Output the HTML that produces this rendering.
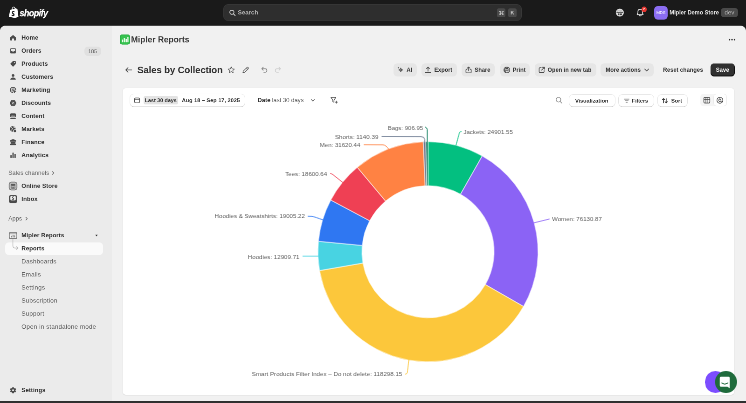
<!DOCTYPE html>
<html>
<head>
<meta charset="utf-8">
<title>Mipler Reports</title>
<style>
*{box-sizing:border-box;margin:0;padding:0}
html,body{width:746px;height:403px;overflow:hidden;background:#1a1a1a;font-family:"Liberation Sans",sans-serif;}
#app{will-change:transform;position:absolute;left:0;top:0;width:1600px;height:864.4px;transform:scale(.46625);transform-origin:0 0;background:#1a1a1a;color:#303030;font-size:13px;line-height:20px;overflow:hidden}
.abs{position:absolute}
/* ---------- top bar ---------- */
#topbar{position:absolute;left:0;top:0;width:1600px;height:54px;background:#1a1a1a}
#search{position:absolute;left:479px;top:9px;width:640px;height:36px;border-radius:10px;background:#2e2e2e;border:1px solid #383838}
#search .txt{position:absolute;left:30px;top:7px;color:#b5b5b5;font-size:13px;font-weight:bold;letter-spacing:.1px}
.kbd{position:absolute;top:8px;width:18px;height:19px;border-radius:4px;background:#4a4a4a;color:#cfcfcf;font-size:11px;line-height:19px;text-align:center;font-weight:bold}
#store{position:absolute;left:1436px;top:17px;color:#e3e3e3;font-size:12px;font-weight:bold;white-space:nowrap}
#avatar{position:absolute;left:1403px;top:12.5px;width:29px;height:29px;border-radius:8px;background:#8b6df2;color:#fff;font-size:9px;line-height:28px;text-align:center;letter-spacing:-.2px}
#dev{position:absolute;left:1546px;top:17px;width:37px;height:20px;border-radius:7px;background:#4a4a4a;color:#b5b5b5;font-size:13px;line-height:19px;text-align:center}
/* ---------- frame ---------- */
#frame{position:absolute;left:0;top:55px;width:1600px;height:805.7px;background:#f1f1f1;border-radius:12px 12px 0 0;overflow:hidden}
#side{position:absolute;left:0;top:0;width:240px;height:810px;background:#ebebeb}
.nav{margin-top:1px;position:absolute;left:46px;height:28px;line-height:28px;font-size:12.9px;font-weight:bold;color:#303030;white-space:nowrap;letter-spacing:.1px}
.nav.sub{font-weight:normal;color:#5a5a5a;font-size:13.4px;letter-spacing:.3px}
.nav.sec{left:18px;font-weight:normal;color:#616161;font-size:12.7px}
.ico{margin-top:1px;position:absolute;left:18px;width:20px;height:20px}
.ico svg{display:block;width:20px;height:20px;transform:scale(.87)}
#badge185{position:absolute;left:180.500px;top:45.5px;width:36px;height:20px;border-radius:8px;background:#e0e0e0;color:#616161;font-size:11.5px;line-height:20px;text-align:center}
#selnav{position:absolute;left:10.5px;top:465.5px;width:210px;height:27px;border-radius:8px;background:#fafafa}
/* ---------- page ---------- */
#apphead{position:absolute;left:281px;top:20px;letter-spacing:.1px;font-size:17.7px;font-weight:bold;color:#383838;line-height:22px;white-space:nowrap}
#title{position:absolute;left:294.5px;top:83px;font-size:20.2px;font-weight:bold;color:#303030;line-height:26px;white-space:nowrap;letter-spacing:-.1px}
.btn{position:absolute;top:82px;height:28px;border-radius:8px;background:#e6e6e6;color:#303030;letter-spacing:.05px;font-size:12.1px;font-weight:bold;line-height:28px;white-space:nowrap}
.btn span{position:absolute;top:0}
.btn svg{position:absolute;top:5px;width:18px;height:18px;margin-left:-1.5px}
#save{background:#303030;color:#fff;box-shadow:inset 0 -1px 0 1px rgba(0,0,0,.8),inset 0 1px 0 rgba(255,255,255,.25)}
#card{position:absolute;left:263px;top:135px;width:1312px;height:658px;border-radius:7px;background:#fff;box-shadow:0 1px 0 rgba(0,0,0,.12),0 0 0 1px rgba(0,0,0,.04)}
#divider{position:absolute;left:0;top:55px;width:1312px;height:1px;background:#ececec}
.tbtn{position:absolute;top:13px;height:26px;border-radius:8px;background:#fff;box-shadow:0 0 0 1px #e3e3e3,0 1.5px 0 0 #bebebe;color:#303030;font-size:11.7px;font-weight:bold;line-height:26px;white-space:nowrap}
.tbtn span{position:absolute;top:0}
.tbtn svg{position:absolute;top:5px;width:16px;height:16px}
#l30{position:absolute;left:29px;top:4px;height:18px;width:74px;border-radius:4px;background:#e3e3e3}
/* chart overlay (unscaled target px) */
#chart{will-change:transform;position:absolute;left:0;top:0;width:746px;height:403px;pointer-events:none}
#chart text{font-family:"Liberation Sans",sans-serif;font-size:6.12px;fill:#5e5e5e}
#fab1{position:absolute;left:704.8px;top:371.3px;width:21.4px;height:21.4px;border-radius:50%;background:#7c4dff}
#fab2{position:absolute;left:714.6px;top:371.3px;width:22px;height:22px;border-radius:50%;background:#1f6b3c}
#bottomstrip{position:absolute;left:0;top:401.3px;width:746px;height:2px;background:#303030}
</style>
</head>
<body>
<div id="app">
  <div id="topbar">
    <!-- shopify logo -->
    <svg class="abs" style="left:17.5px;top:13.5px;width:22px;height:25.5px" viewBox="0 0 24 28">
      <path d="M4.2 7.6 L15.2 5.2 L17.6 3.2 L19.4 5.6 L21.2 6 L23.6 24.6 L14.8 26.8 L1 24.2 Z" fill="#fff"/>
      <path d="M8.6 7 C8.8 3.6 10.6 1.2 12.6 1.2 C14.4 1.2 15.4 3 15.4 6" fill="none" stroke="#fff" stroke-width="1.5"/>
      <path d="M14.6 10.6 L13.6 13.6 C12.6 13 11.4 13 10.8 13.4 C10 14 10.6 14.8 12 15.6 C13.8 16.6 14.8 18 14.4 20 C14 22.2 12 23.2 10 22.8 C8.8 22.6 7.8 22 7.2 21.2 L8 18.6 C8.8 19.4 10 20 10.8 19.8 C11.6 19.6 11.6 18.8 10.6 18 C8.8 16.8 7.8 15.6 8.2 13.6 C8.6 11 11.6 9.4 14.6 10.6Z" fill="#1a1a1a"/>
    </svg>
    <div class="abs" style="left:42px;top:13.5px;color:#fff;font-size:18.6px;font-weight:bold;font-style:italic;line-height:28px;letter-spacing:-.85px;transform:scaleY(1.09);transform-origin:0 50%;-webkit-text-stroke:.35px #fff">shopify</div>
    <div id="search">
      <svg class="abs" style="left:11px;top:10px;width:15px;height:15px" viewBox="0 0 17 17"><circle cx="7.2" cy="7.2" r="5" fill="none" stroke="#d0d0d0" stroke-width="2"/><path d="M11 11 L15 15" stroke="#d0d0d0" stroke-width="2.2" stroke-linecap="round"/></svg>
      <div class="txt">Search</div>
      <div class="kbd" style="left:586px"><svg viewBox="0 0 12 12" style="position:absolute;left:3.5px;top:4px;width:11px;height:11px"><path d="M4.2 4.2 H7.800 V7.800 H4.200 Z M4.200 4.200 V3 A1.300 1.300 0 1 0 3 4.200 Z M7.800 4.200 H9 A1.300 1.300 0 1 0 7.800 3 Z M7.800 7.800 V9 A1.300 1.300 0 1 0 9 7.800 Z M4.200 7.800 H3 A1.300 1.300 0 1 0 4.200 9 Z" fill="none" stroke="#d4d4d4" stroke-width="1.100"/></svg></div>
      <div class="kbd" style="left:610px">K</div>
    </div>
    <!-- storefront icon -->
    <svg class="abs" style="left:1319px;top:17px;width:20px;height:20px" viewBox="0 0 20 20">
      <circle cx="10.4" cy="10" r="8.600" fill="#dedede"/>
      <path d="M3.400 8.600 Q4.600 10.400 6 8.800 Q7.400 10.400 8.800 8.800 Q10.400 10.400 11.800 8.800 Q13.400 10.400 14.800 8.800 Q16.200 10.400 17.400 8.600" fill="none" stroke="#2a2a2a" stroke-width="1.500"/>
      <path d="M4.800 6.200 H16" stroke="#8a8a8a" stroke-width="1"/>
      <rect x="6" y="11.800" width="3.600" height="3.600" rx=".6" fill="#3a3a3a"/>
      <rect x="11" y="11.800" width="3.800" height="3.600" rx=".6" fill="#3a3a3a"/>
    </svg>
    <!-- bell -->
    <svg class="abs" style="left:1363px;top:17px;width:20px;height:20px" viewBox="0 0 20 20">
      <path d="M10 2.8 C6.8 2.8 5.2 5.2 5.2 8 V11 L3.6 13.6 Q3.4 14.4 4.4 14.4 H15.6 Q16.6 14.4 16.4 13.6 L14.8 11 V8 C14.8 5.2 13.2 2.8 10 2.8Z" fill="none" stroke="#e3e3e3" stroke-width="1.7" stroke-linejoin="round"/>
      <path d="M7.8 16 Q10 18.6 12.2 16" fill="none" stroke="#e3e3e3" stroke-width="1.7" stroke-linecap="round"/>
    </svg>
    <div class="abs" style="left:1375.5px;top:14px;width:11.5px;height:11.5px;border-radius:50%;background:#e5352f;color:#fff;font-size:7px;line-height:11px;text-align:center;font-weight:bold">2</div>
    <div id="avatar">MDS</div>
    <div id="store">Mipler Demo Store</div>
    <div id="dev">dev</div>
  </div>

  <div id="frame"><div id="inner" style="position:absolute;left:0;top:-1px;width:1600px;height:807px">
    <div id="side">
      <div id="selnav"></div>
      <!-- main nav -->
      <div class="nav" style="top:12px">Home</div>
      <div class="nav" style="top:40px">Orders</div>
      <div class="nav" style="top:68px">Products</div>
      <div class="nav" style="top:96px">Customers</div>
      <div class="nav" style="top:124px">Marketing</div>
      <div class="nav" style="top:152px">Discounts</div>
      <div class="nav" style="top:180px">Content</div>
      <div class="nav" style="top:208px">Markets</div>
      <div class="nav" style="top:236px">Finance</div>
      <div class="nav" style="top:264px">Analytics</div>
      <div id="badge185">185</div>

      <div class="nav sec" style="top:302px">Sales channels</div>
      <svg class="abs" style="left:108.5px;top:312px;width:10px;height:10px" viewBox="0 0 10 10"><path d="M3.5 2 L6.5 5 L3.5 8" fill="none" stroke="#616161" stroke-width="1.4" stroke-linecap="round" stroke-linejoin="round"/></svg>
      <div class="nav" style="top:330px">Online Store</div>
      <div class="nav" style="top:358px">Inbox</div>

      <div class="nav sec" style="top:400px">Apps</div>
      <svg class="abs" style="left:52px;top:410px;width:10px;height:10px" viewBox="0 0 10 10"><path d="M3.5 2 L6.5 5 L3.5 8" fill="none" stroke="#616161" stroke-width="1.4" stroke-linecap="round" stroke-linejoin="round"/></svg>

      <div class="nav" style="top:436px">Mipler Reports</div>
      <svg class="abs" style="left:202px;top:446px;width:10px;height:10px" viewBox="0 0 10 10"><path d="M2.4 3.4 H7.6 L5 7 Z" fill="#303030"/></svg>
      <div class="nav" style="top:464px">Reports</div>
      <div class="nav sub" style="top:492px">Dashboards</div>
      <div class="nav sub" style="top:520px">Emails</div>
      <div class="nav sub" style="top:548px">Settings</div>
      <div class="nav sub" style="top:576px">Subscription</div>
      <div class="nav sub" style="top:604px">Support</div>
      <div class="nav sub" style="top:632px">Open in standalone mode</div>

      <div class="nav" style="top:768px">Settings</div>

      <!-- icons -->
      <div class="ico" style="top:16px"><svg viewBox="0 0 20 20"><path d="M10 3 L3.6 8.6 Q3 9.2 3 10 V15.4 Q3 16.6 4.2 16.6 H7.6 V12.6 Q7.6 11.6 8.6 11.6 H11.4 Q12.4 11.6 12.4 12.6 V16.6 H15.8 Q17 16.6 17 15.4 V10 Q17 9.2 16.4 8.6 Z" fill="#4a4a4a"/></svg></div>
      <div class="ico" style="top:44px"><svg viewBox="0 0 20 20"><path d="M5 3.6 H15 Q16.8 3.6 16.8 5.4 V14.6 Q16.8 16.4 15 16.4 H5 Q3.2 16.4 3.2 14.6 V5.4 Q3.2 3.6 5 3.6Z M5 5.4 V10.6 H7.4 Q8 10.6 8.2 11.2 Q8.6 12.4 10 12.4 Q11.4 12.4 11.8 11.2 Q12 10.6 12.6 10.6 H15 V5.4 Z" fill="#4a4a4a" fill-rule="evenodd"/></svg></div>
      <div class="ico" style="top:72px"><svg viewBox="0 0 20 20"><path d="M10.4 3.2 H15.4 Q16.8 3.2 16.8 4.6 V9.6 Q16.8 10.4 16.2 11 L11 16.2 Q10 17.2 9 16.2 L3.8 11 Q2.8 10 3.8 9 L9 3.8 Q9.6 3.2 10.4 3.2Z M13.4 5.4 A1.2 1.2 0 1 0 13.41 5.4Z" fill="#4a4a4a" fill-rule="evenodd"/></svg></div>
      <div class="ico" style="top:100px"><svg viewBox="0 0 20 20"><circle cx="10" cy="6.4" r="3.4" fill="#4a4a4a"/><path d="M3.6 16.6 Q3.2 16.6 3.4 15.6 Q4.6 11.4 10 11.4 Q15.4 11.4 16.6 15.6 Q16.8 16.6 16.4 16.6 Z" fill="#4a4a4a"/></svg></div>
      <div class="ico" style="top:128px"><svg viewBox="0 0 20 20"><path d="M16.400 8.800 A6.600 6.600 0 1 0 8.800 16.400" fill="none" stroke="#4a4a4a" stroke-width="2.300" stroke-linecap="round"/><path d="M12.600 8.400 A3 3 0 1 0 8.400 12.600" fill="none" stroke="#4a4a4a" stroke-width="2" stroke-linecap="round"/><path d="M10.200 10.200 L18 12.800 L14.800 14.600 L13 18 Z" fill="#4a4a4a" stroke="#4a4a4a" stroke-width=".8" stroke-linejoin="round"/></svg></div>
      <div class="ico" style="top:156px"><svg viewBox="0 0 20 20"><path d="M10 2.4 L12 4 L14.6 3.8 L15.4 6.2 L17.6 7.6 L16.8 10 L17.6 12.4 L15.4 13.8 L14.6 16.2 L12 16 L10 17.6 L8 16 L5.4 16.2 L4.600 13.8 L2.4 12.4 L3.2 10 L2.4 7.6 L4.6 6.2 L5.4 3.8 L8 4 Z" fill="#4a4a4a" stroke="#4a4a4a" stroke-width="1" stroke-linejoin="round"/><circle cx="7.8" cy="7.8" r="1.1" fill="#ebebeb"/><circle cx="12.2" cy="12.2" r="1.1" fill="#ebebeb"/><path d="M12.6 7.4 L7.4 12.600" stroke="#ebebeb" stroke-width="1.3" stroke-linecap="round"/></svg></div>
      <div class="ico" style="top:184px"><svg viewBox="0 0 20 20"><path d="M5 3.400 H15 Q17 3.400 17 5.400 V10.600 Q17 12.600 15 12.600 H5 Q3 12.600 3 10.600 V5.400 Q3 3.400 5 3.400Z" fill="#4a4a4a"/><path d="M5 10.400 L7.600 8 L9.800 10 L12.400 8.400 L15 10.600 V10.800 H5Z" fill="#ebebeb"/><rect x="3" y="14.200" width="14" height="2.600" rx="1.300" fill="#4a4a4a"/></svg></div>
      <div class="ico" style="top:212px"><svg viewBox="0 0 20 20"><circle cx="9.400" cy="9.400" r="7" fill="#4a4a4a"/><path d="M4.600 6 Q8 6.400 8.400 8.600 Q8.600 10 7 10.800 Q5.800 11.600 6.600 13.400" fill="none" stroke="#ebebeb" stroke-width="1.300"/><path d="M11.200 3.200 Q10.800 5.400 12.600 5.800 Q14 6 15 4.800" fill="none" stroke="#ebebeb" stroke-width="1.300"/><circle cx="14.600" cy="14.600" r="3.600" fill="#4a4a4a" stroke="#ebebeb" stroke-width="1.400"/></svg></div>
      <div class="ico" style="top:240px"><svg viewBox="0 0 20 20"><path d="M10 2.400 L17 5.800 V8 H3 V5.800 Z" fill="#4a4a4a" stroke="#4a4a4a" stroke-width=".8" stroke-linejoin="round"/><rect x="4" y="8.400" width="12" height="5.600" fill="#4a4a4a"/><rect x="3" y="14.400" width="14" height="2.800" rx=".9" fill="#4a4a4a"/></svg></div>
      <div class="ico" style="top:268px"><svg viewBox="0 0 20 20"><rect x="3.400" y="9.800" width="3.200" height="7" rx="1.100" fill="#4a4a4a"/><rect x="8.400" y="3.400" width="3.200" height="13.400" rx="1.100" fill="#4a4a4a"/><rect x="13.400" y="7" width="3.200" height="9.800" rx="1.100" fill="#4a4a4a"/></svg></div>
      <!-- online store -->
      <div class="ico" style="top:334px"><svg viewBox="0 0 20 20" style="transform:none"><rect x="1.600" y="1.600" width="16.800" height="16.800" rx="4.600" fill="#bdbdbd" stroke="#5a5a5a" stroke-width="1.500"/><path d="M5.600 5.200 H14.400 L15.200 8.200 Q14.600 9.800 13.200 9.200 Q12.200 10.200 10.900 9.400 H9.100 Q7.800 10.200 6.800 9.200 Q5.400 9.800 4.800 8.200 Z" fill="#5a5a5a"/><path d="M6 10.800 V13.600 Q6 14.800 7.200 14.800 H12.800 Q14 14.800 14 13.600 V10.800" fill="none" stroke="#5a5a5a" stroke-width="1.400"/><rect x="8.600" y="11.600" width="2.800" height="3" fill="#5a5a5a"/></svg></div>
      <!-- inbox -->
      <div class="ico" style="top:362px"><svg viewBox="0 0 20 20" style="transform:none"><rect x="1.200" y="1.200" width="17.600" height="17.600" rx="4.600" fill="#4a4a4a"/><rect x="4.200" y="3.200" width="11.600" height="9.600" rx="2.200" fill="#f1f1f1"/><path d="M12 5.400 Q10 4.400 8.600 5.600 Q7.800 7 9.800 7.800 Q12.400 8.600 11.400 10.200 Q10 11.400 7.800 10.200" fill="none" stroke="#3a3a3a" stroke-width="1.500" stroke-linecap="round"/></svg></div>
      <!-- mipler app icon -->
      <div class="ico" style="top:440px"><svg viewBox="0 0 20 20" style="transform:scale(1.16)"><rect x="3" y="4.200" width="14" height="11.800" rx="2.600" fill="#f4f4f4" stroke="#7a7a7a" stroke-width="1.500"/><path d="M3.600 7 H16.400" stroke="#7a7a7a" stroke-width="1.300"/><rect x="6" y="10.600" width="1.800" height="3.200" fill="#7a7a7a"/><rect x="9.100" y="9" width="1.800" height="4.800" fill="#7a7a7a"/><rect x="12.200" y="9.800" width="1.800" height="4" fill="#7a7a7a"/></svg></div>
      <!-- sub-nav connector -->
      <svg class="abs" style="left:22px;top:458px;width:24px;height:28px" viewBox="0 0 24 28"><path d="M5.600 1 V15 Q5.600 20 10.6 20 H16" fill="none" stroke="#b5b5b5" stroke-width="1.4"/><path d="M13.600 17 L16.6 20 L13.600 23" fill="none" stroke="#b5b5b5" stroke-width="1.4" stroke-linecap="round" stroke-linejoin="round"/></svg>
      <!-- settings gear -->
      <div class="ico" style="top:772px"><svg viewBox="0 0 20 20"><path d="M8.600 2.600 H11.4 L11.9 4.7 L13.2 5.4 L15.2 4.700 L16.700 7.100 L15.2 8.600 V10.200 L16.700 11.7 L15.2 14.2 L13.2 13.4 L11.9 14.2 L11.4 16.3 H8.600 L8.100 14.2 L6.800 13.4 L4.800 14.2 L3.300 11.7 L4.800 10.200 V8.600 L3.300 7.100 L4.800 4.700 L6.800 5.4 L8.100 4.700 Z" fill="#4a4a4a" stroke="#4a4a4a" stroke-width="1.2" stroke-linejoin="round" transform="translate(0 .55)"/><circle cx="10" cy="10" r="2.300" fill="#ebebeb"/></svg></div>
    </div>

    <!-- app header -->
    <svg class="abs" style="left:257px;top:20px;width:22px;height:22px" viewBox="0 0 22 22"><rect x="0" y="0" width="22" height="21.4" rx="5" fill="#36c24f"/><rect x=".8" y=".8" width="20.4" height="19.8" rx="4.400" fill="none" stroke="#1fa53a" stroke-width="1.2"/><rect x="4.4" y="10.8" width="2.800" height="5.600" rx=".6" fill="#e9fbe9"/><rect x="8.4" y="7.6" width="2.800" height="8.800" rx=".6" fill="#e9fbe9"/><rect x="12.4" y="9.4" width="2.800" height="7" rx=".6" fill="#e9fbe9"/><rect x="16.2" y="5.600" width="2.400" height="10.8" rx=".6" fill="#e9fbe9"/></svg>
    <div id="apphead">Mipler Reports</div>
    <svg class="abs" style="left:1560px;top:21px;width:20px;height:20px" viewBox="0 0 20 20"><circle cx="4.600" cy="10" r="1.700" fill="#303030"/><circle cx="10" cy="10" r="1.700" fill="#303030"/><circle cx="15.4" cy="10" r="1.700" fill="#303030"/></svg>

    <!-- title row -->
    <svg class="abs" style="left:266px;top:86px;width:20px;height:20px" viewBox="0 0 20 20"><path d="M16.4 10 H4 M8.600 5.200 L3.800 10 L8.600 14.8" fill="none" stroke="#4a4a4a" stroke-width="1.700" stroke-linecap="round" stroke-linejoin="round"/></svg>
    <div id="title">Sales by Collection</div>
    <svg class="abs" style="left:486px;top:86px;width:20px;height:20px" viewBox="0 0 20 20"><path d="M10 3.400 L12 7.600 L16.600 8.200 L13.200 11.400 L14.100 16 L10 13.700 L5.900 16 L6.800 11.400 L3.400 8.200 L8 7.600 Z" fill="none" stroke="#5a5a5a" stroke-width="1.350" stroke-linejoin="round"/></svg>
    <svg class="abs" style="left:517px;top:86px;width:20px;height:20px" viewBox="0 0 20 20"><path d="M4 16 L4.800 12.400 L12.800 4.400 Q13.800 3.400 14.800 4.400 L15.600 5.200 Q16.600 6.200 15.600 7.200 L7.600 15.200 Z M11.400 6 L14 8.600" fill="none" stroke="#5a5a5a" stroke-width="1.350" stroke-linejoin="round"/></svg>
    <svg class="abs" style="left:557px;top:86px;width:20px;height:20px" viewBox="0 0 20 20"><path d="M7.600 4.200 L4.400 7.400 L7.600 10.600 M4.800 7.400 H11.600 Q15.400 7.400 15.400 11.200 Q15.400 15 11.600 15 H9" fill="none" stroke="#8a8a8a" stroke-width="1.700" stroke-linecap="round" stroke-linejoin="round"/></svg>
    <svg class="abs" style="left:586px;top:86px;width:20px;height:20px" viewBox="0 0 20 20"><path d="M12.400 4.200 L15.600 7.400 L12.400 10.600 M15.200 7.400 H8.400 Q4.600 7.400 4.600 11.200 Q4.600 15 8.400 15 H11" fill="none" stroke="#cfcfcf" stroke-width="1.700" stroke-linecap="round" stroke-linejoin="round"/></svg>

    <!-- action buttons -->
    <div class="btn" style="left:844px;width:50px">
      <svg style="left:8px" viewBox="0 0 16 16"><path d="M7.600 4.400 L8.600 7 L11.200 8 L8.600 9 L7.600 11.600 L6.600 9 L4 8 L6.600 7 Z" fill="none" stroke="#4a4a4a" stroke-width="1.500" stroke-linejoin="round"/><path d="M3 2 L3.500 3.300 L4.800 3.800 L3.500 4.300 L3 5.600 L2.500 4.300 L1.200 3.800 L2.500 3.300Z" fill="#4a4a4a"/></svg>
      <span style="left:28px">AI</span></div>
    <div class="btn" style="left:903.5px;width:76px">
      <svg style="left:7px" viewBox="0 0 16 16"><path d="M8 10.400 V2.800 M5.200 5.400 L8 2.600 L10.800 5.400" fill="none" stroke="#4a4a4a" stroke-width="1.400" stroke-linecap="round" stroke-linejoin="round"/><path d="M3 13.200 H13" stroke="#4a4a4a" stroke-width="1.400" stroke-linecap="round"/></svg>
      <span style="left:28px">Export</span></div>
    <div class="btn" style="left:990px;width:71px">
      <svg style="left:7px" viewBox="0 0 16 16"><path d="M8 9.600 V2.400 M5.600 4.600 L8 2.200 L10.400 4.600" fill="none" stroke="#4a4a4a" stroke-width="1.400" stroke-linecap="round" stroke-linejoin="round"/><path d="M5 6.800 H4.200 Q3 6.800 3 8 V12.400 Q3 13.600 4.200 13.600 H11.800 Q13 13.600 13 12.400 V8 Q13 6.800 11.800 6.800 H11" fill="none" stroke="#4a4a4a" stroke-width="1.400" stroke-linecap="round"/></svg>
      <span style="left:28px">Share</span></div>
    <div class="btn" style="left:1072.500px;width:63px">
      <svg style="left:7px" viewBox="0 0 16 16"><circle cx="8" cy="8" r="5.600" fill="none" stroke="#4a4a4a" stroke-width="1.400"/><rect x="5.400" y="3.600" width="5.200" height="2.600" fill="#4a4a4a"/><rect x="4" y="6.400" width="8" height="3.600" rx=".8" fill="#e6e6e6" stroke="#4a4a4a" stroke-width="1.100"/><rect x="5.800" y="9" width="4.400" height="3.200" fill="#e3e3e3" stroke="#4a4a4a" stroke-width="1.100"/></svg>
      <span style="left:27px">Print</span></div>
    <div class="btn" style="left:1146.500px;width:132px">
      <svg style="left:8px" viewBox="0 0 16 16"><path d="M7 3.600 H5 Q3 3.600 3 5.600 V11 Q3 13 5 13 H10.400 Q12.400 13 12.400 11 V9" fill="none" stroke="#4a4a4a" stroke-width="1.400" stroke-linecap="round"/><path d="M9.400 2.800 H13.200 V6.600 M13 3 L7.600 8.400" fill="none" stroke="#4a4a4a" stroke-width="1.400" stroke-linecap="round" stroke-linejoin="round"/></svg>
      <span style="left:28px">Open in new tab</span></div>
    <div class="btn" style="left:1288px;width:113.500px">
      <span style="left:11px">More actions</span>
      <svg style="left:91px" viewBox="0 0 16 16"><path d="M4.400 6.400 L8 10 L11.600 6.400" fill="none" stroke="#4a4a4a" stroke-width="1.500" stroke-linecap="round" stroke-linejoin="round"/></svg></div>
    <div class="btn" style="left:1422px;width:88px;background:none"><span style="left:0">Reset changes</span></div>
    <div class="btn" id="save" style="left:1523.500px;width:52.500px"><span style="left:12px">Save</span></div>

    <!-- card -->
    <div id="card">
      <div id="divider"></div>
      <div class="tbtn" style="left:15.500px;width:246px">
        <svg style="left:7px" viewBox="0 0 16 16"><rect x="2.600" y="3.200" width="10.800" height="10.200" rx="2.400" fill="none" stroke="#4a4a4a" stroke-width="1.400"/><path d="M2.800 7 H13.200" stroke="#4a4a4a" stroke-width="1.400"/></svg>
        <div id="l30"></div>
        <span style="left:32px;font-size:11.4px">Last 30 days</span>
        <span style="left:111.5px;letter-spacing:.12px">Aug 18 &ndash; Sep 17, 2025</span>
      </div>
      <div class="abs" style="left:289.500px;top:13px;line-height:26px;font-size:12.7px;white-space:nowrap;color:#5a5a5a"><b style="color:#303030">Date</b> last 30 days</div>
      <svg class="abs" style="left:400px;top:18px;width:16px;height:16px" viewBox="0 0 16 16"><path d="M4.800 6.600 L8 9.800 L11.200 6.600" fill="none" stroke="#616161" stroke-width="1.400" stroke-linecap="round" stroke-linejoin="round"/></svg>
      <svg class="abs" style="left:443px;top:16px;width:20px;height:20px" viewBox="0 0 20 20"><path d="M3.600 4 H14.400 L10.400 9.400 V14.400 L7.800 13 V9.400 Z" fill="none" stroke="#4a4a4a" stroke-width="1.400" stroke-linejoin="round"/><path d="M15.200 11.400 V16.600 M12.600 14 H17.800" stroke="#4a4a4a" stroke-width="1.500" stroke-linecap="round"/></svg>

      <svg class="abs" style="left:927px;top:17px;width:18px;height:18px" viewBox="0 0 18 18"><circle cx="7.800" cy="7.800" r="5" fill="none" stroke="#8a8a8a" stroke-width="1.500"/><path d="M11.600 11.600 L15.200 15.200" stroke="#8a8a8a" stroke-width="1.500" stroke-linecap="round"/></svg>
      <div class="tbtn" style="left:957.500px;width:98px;top:13.5px;height:25px;line-height:25px"><span style="left:13px">Visualization</span></div>
      <div class="tbtn" style="left:1064px;width:75px;top:13.5px;height:25px;line-height:25px">
        <svg style="left:9px" viewBox="0 0 16 16"><path d="M2.600 4.600 H13.400 M4.600 8 H11.400 M6.600 11.400 H9.400" stroke="#8a8a8a" stroke-width="1.600" stroke-linecap="round"/></svg>
        <span style="left:28px">Filters</span></div>
      <div class="tbtn" style="left:1147.500px;width:63px;top:13.5px;height:25px;line-height:25px">
        <svg style="left:7px" viewBox="0 0 16 16"><path d="M5.200 12.400 V3.400 M2.800 5.800 L5.200 3.400 L7.600 5.800 M10.800 3.600 V12.600 M8.400 10.200 L10.800 12.600 L13.200 10.200" fill="none" stroke="#303030" stroke-width="1.700" stroke-linecap="round" stroke-linejoin="round"/></svg>
        <span style="left:29px">Sort</span></div>
      <div class="abs" style="left:1238.500px;top:11.500px;width:57.500px;height:27px;border-radius:7px;background:#f5f5f5"></div>
      <div class="abs" style="left:1267.500px;top:12.500px;width:27.500px;height:25px;border-radius:6px;background:#fff;box-shadow:0 0 0 1px rgba(0,0,0,.05)"></div>
      <svg class="abs" style="left:1243.500px;top:16.500px;width:18px;height:18px" viewBox="0 0 18 18"><rect x="2.600" y="3" width="12.800" height="12" rx="2.200" fill="none" stroke="#3a3a3a" stroke-width="1.450"/><path d="M2.600 7 H15.400 M7 3 V15 M11.200 3 V15" stroke="#3a3a3a" stroke-width="1.250"/></svg>
      <svg class="abs" style="left:1271.500px;top:16.500px;width:18px;height:18px" viewBox="0 0 18 18"><circle cx="9" cy="9" r="6.400" fill="none" stroke="#3a3a3a" stroke-width="1.450"/><circle cx="9" cy="9" r="2.500" fill="none" stroke="#3a3a3a" stroke-width="1.250"/><path d="M9 2.600 V6.400 M11.200 10.200 L14.600 12.200" stroke="#3a3a3a" stroke-width="1.250"/></svg>
    </div>
  </div></div>
</div>

<!-- chart overlay in target px -->
<svg id="chart" viewBox="0 0 746 403">
<path d="M428.00 141.65A110.1 110.1 0 0 1 482.28 155.96L460.56 194.28A66.05 66.05 0 0 0 428.00 185.70Z" fill="#03BF80" stroke="#fff" stroke-width="0.5" stroke-linejoin="round"/>
<path d="M482.28 155.96A110.1 110.1 0 0 1 523.51 306.53L485.30 284.61A66.05 66.05 0 0 0 460.56 194.28Z" fill="#8B63F5" stroke="#fff" stroke-width="0.5" stroke-linejoin="round"/>
<path d="M523.51 306.53A110.1 110.1 0 0 1 319.52 270.59L362.92 263.05A66.05 66.05 0 0 0 485.30 284.61Z" fill="#FCC73B" stroke="#fff" stroke-width="0.5" stroke-linejoin="round"/>
<path d="M319.52 270.59A110.1 110.1 0 0 1 318.40 241.27L362.25 245.46A66.05 66.05 0 0 0 362.92 263.05Z" fill="#48D3E2" stroke="#fff" stroke-width="0.5" stroke-linejoin="round"/>
<path d="M318.40 241.27A110.1 110.1 0 0 1 330.79 200.05L369.68 220.74A66.05 66.05 0 0 0 362.25 245.46Z" fill="#2F77F2" stroke="#fff" stroke-width="0.5" stroke-linejoin="round"/>
<path d="M330.79 200.05A110.1 110.1 0 0 1 357.33 167.33L385.60 201.10A66.05 66.05 0 0 0 369.68 220.74Z" fill="#EF4054" stroke="#fff" stroke-width="0.5" stroke-linejoin="round"/>
<path d="M357.33 167.33A110.1 110.1 0 0 1 423.34 141.75L425.20 185.76A66.05 66.05 0 0 0 385.60 201.10Z" fill="#FF8243" stroke="#fff" stroke-width="0.5" stroke-linejoin="round"/>
<path d="M423.34 141.75A110.1 110.1 0 0 1 425.93 141.67L426.76 185.71A66.05 66.05 0 0 0 425.20 185.76Z" fill="#6B778C" stroke="#fff" stroke-width="0.5" stroke-linejoin="round"/>
<path d="M425.93 141.67A110.1 110.1 0 0 1 428.00 141.65L428.00 185.70A66.05 66.05 0 0 0 426.76 185.71Z" fill="#047857" stroke="#fff" stroke-width="0.5" stroke-linejoin="round"/>
  <g fill="none" stroke-width="0.8" stroke-linecap="round">
    <path d="M456 145.200 C457.500 140 459 134 459.600 132.300 Q459.900 131.700 461.200 131.600" stroke="#03BF80"/>
    <path d="M534 222.800 L549.200 219.100" stroke="#8B63F5"/>
    <path d="M408.900 359.500 C408.300 364 407.600 371 407.300 372.800 Q407 374 405.500 374.200" stroke="#FCC73B"/>
    <path d="M318.300 256.200 H303" stroke="#48D3E2"/>
    <path d="M322.800 219.800 C318 218.200 314 216.600 312 216.400 L308.200 216.300" stroke="#2F77F2"/>
    <path d="M342.700 182.400 L333 174.700 Q331.800 173.700 330.600 173.500" stroke="#EF4054"/>
    <path d="M388.600 149 C387 146.500 385 145 383 144.800 L364.200 144.700" stroke="#FF8243"/>
    <path d="M424.700 141.700 V139.500 Q424.700 136.700 421 136.600 L382 136.500" stroke="#64748B"/>
    <path d="M427.300 141.600 V129.500 Q427.200 127.800 425.400 127.100" stroke="#047857"/>
  </g>
  <g>
    <text x="463.400" y="134" textLength="49.400" lengthAdjust="spacingAndGlyphs">Jackets: 24901.55</text>
    <text x="552.100" y="221.200" textLength="49.700" lengthAdjust="spacingAndGlyphs">Women: 76130.87</text>
    <text x="251.800" y="376.200" textLength="150.500" lengthAdjust="spacingAndGlyphs">Smart Products Filter Index &ndash; Do not delete: 118298.15</text>
    <text x="247.800" y="259" textLength="51.700" lengthAdjust="spacingAndGlyphs">Hoodies: 12909.71</text>
    <text x="214.600" y="218.300" textLength="90.300" lengthAdjust="spacingAndGlyphs">Hoodies &amp; Sweatshirts: 19005.22</text>
    <text x="285.200" y="175.800" textLength="42" lengthAdjust="spacingAndGlyphs">Tees: 18600.64</text>
    <text x="319.700" y="147" textLength="40.600" lengthAdjust="spacingAndGlyphs">Men: 31620.44</text>
    <text x="334.900" y="138.700" textLength="43.500" lengthAdjust="spacingAndGlyphs">Shorts: 1140.39</text>
    <text x="387.700" y="129.700" textLength="35.400" lengthAdjust="spacingAndGlyphs">Bags: 906.95</text>
  </g>
</svg>
<div id="fab1"></div>
<div id="fab2">
  <svg style="position:absolute;left:4.600px;top:4.400px;width:12px;height:13px" viewBox="0 0 12 13"><path d="M2 .8 H9.600 Q10.800 .8 10.800 2 V12.200 L8.400 10.800 H2 Q.8 10.800 .8 9.600 V2 Q.8 .8 2 .8Z" fill="#fff"/><path d="M2.800 7.200 Q5.800 9.400 8.800 7.200" fill="none" stroke="#1f6b3c" stroke-width="1" stroke-linecap="round"/></svg>
</div>
<div id="bottomstrip"></div>
</body>
</html>
